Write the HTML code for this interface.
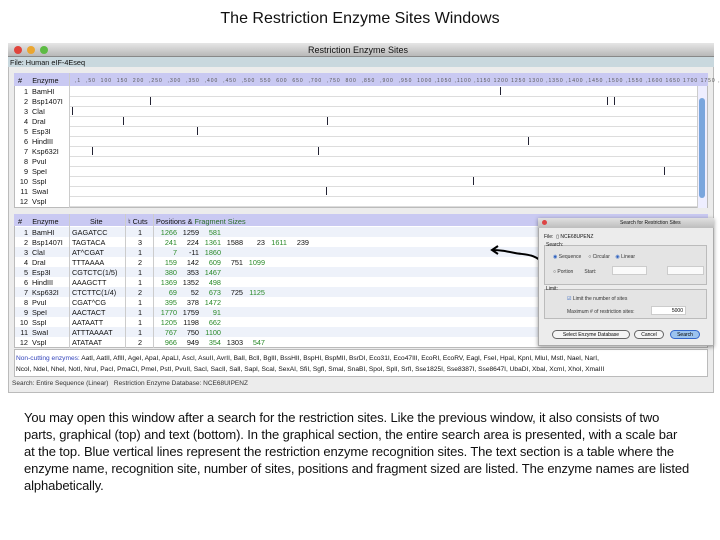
<!DOCTYPE html>
<html><head><style>
*{margin:0;padding:0;box-sizing:border-box}
body{width:720px;height:540px;background:#fff;position:relative;overflow:hidden;font-family:"Liberation Sans",sans-serif}
.a{position:absolute}
.t{font-size:7.3px;color:#111;white-space:nowrap}
.g{color:#2a8a2a}
p{position:absolute;left:24px;top:409px;font-size:13px;line-height:17px;color:#111;letter-spacing:-0.12px;white-space:nowrap}
</style></head><body>
<div class="a" style="left:0;top:10px;width:720px;text-align:center;font-size:16px;color:#111">The Restriction Enzyme Sites Windows</div>

<div class="a" style="left:8px;top:43px;width:706px;height:350px;background:#ececec;border:1px solid #bbb"></div>
<div class="a" style="left:8px;top:43px;width:706px;height:14px;background:linear-gradient(#e6e6e6,#b8b8b8);border-bottom:1px solid #888"></div>
<div class="a" style="left:14px;top:46px;width:8px;height:8px;border-radius:50%;background:#e0443c"></div>
<div class="a" style="left:27px;top:46px;width:8px;height:8px;border-radius:50%;background:#eaa631"></div>
<div class="a" style="left:40px;top:46px;width:8px;height:8px;border-radius:50%;background:#5dbb44"></div>
<div class="a t" style="left:308px;top:45px;font-size:9px">Restriction Enzyme Sites</div>
<div class="a" style="left:8px;top:57px;width:706px;height:10px;background:#c9d8de"></div>
<div class="a t" style="left:10px;top:58px">File: Human eIF-4Eseq</div>

<div class="a" style="left:14px;top:73px;width:694px;height:135px;background:#fff;border:1px solid #bbb"></div>
<div class="a" style="left:14px;top:73px;width:694px;height:13px;background:#c9c9f2"></div>
<div class="a t" style="left:18px;top:76px">#&nbsp;&nbsp;&nbsp;&nbsp;&nbsp;Enzyme</div>
<div class="a t" style="left:75px;top:78px;font-size:5px;color:#555;letter-spacing:1px">,1 &nbsp;,50 &nbsp;100 &nbsp;150 &nbsp;200 &nbsp;,250 &nbsp;,300 &nbsp;,350 &nbsp;,400 &nbsp;,450 &nbsp;,500 &nbsp;550 &nbsp;600 &nbsp;650 &nbsp;,700 &nbsp;,750 &nbsp;800 &nbsp;,850 &nbsp;,900 &nbsp;,950 &nbsp;1000 ,1050 ,1100 ,1150 1200 1250 1300 ,1350 ,1400 ,1450 ,1500 ,1550 ,1600 1650 1700 1750 ,1800</div>
<div class="a" style="left:69px;top:73px;width:1px;height:135px;background:#ccc"></div>
<div class="a" style="left:697px;top:86px;width:10px;height:122px;background:#eef;border-left:1px solid #ccc"></div>
<div class="a" style="left:699px;top:98px;width:6px;height:100px;border-radius:3px;background:#7aa6dd"></div>
<div id="gr"></div>

<div class="a" style="left:14px;top:214px;width:694px;height:134px;background:#fff;border:1px solid #bbb"></div>
<div class="a" style="left:14px;top:214px;width:694px;height:12px;background:#c9c9f2"></div>
<div class="a t" style="left:18px;top:217px">#&nbsp;&nbsp;&nbsp;&nbsp;&nbsp;Enzyme</div>
<div class="a t" style="left:90px;top:217px">Site</div>
<div class="a t" style="left:128px;top:217px">♮ Cuts</div>
<div class="a t" style="left:156px;top:217px">Positions &amp; <span style="color:#2a6a2a">Fragment Sizes</span></div>
<div id="tb"></div>

<div class="a" style="left:14px;top:349px;width:694px;height:28px;background:#fff;border:1px solid #bbb"></div>
<div class="a t" style="left:16px;top:355px;font-size:6.6px"><span style="color:#3344bb">Non-cutting enzymes:</span> AatI, AatII, AflII, AgeI, ApaI, ApaLI, AscI, AsuII, AvrII, BalI, BclI, BglII, BssHII, BspHI, BspMII, BsrDI, Eco31I, Eco47III, EcoRI, EcoRV, EagI, FseI, HpaI, KpnI, MluI, MstI, NaeI, NarI,</div>
<div class="a t" style="left:16px;top:366px;font-size:6.6px">NcoI, NdeI, NheI, NotI, NruI, PacI, PmaCI, PmeI, PstI, PvuII, SacI, SacII, SalI, SapI, ScaI, SexAI, SfiI, SgfI, SmaI, SnaBI, SpoI, SplI, SrfI, Sse1825I, Sse8387I, Sse8647I, UbaDI, XbaI, XcmI, XhoI, XmaIII</div>
<div class="a t" style="left:12px;top:380px;font-size:6.5px;color:#333">Search: Entire Sequence (Linear) &nbsp;&nbsp;Restriction Enzyme Database: NCE68UIPENZ</div>

<svg class="a" style="left:490px;top:245px" width="60" height="25"><path d="M55 20 C45 8 35 10 25 8 C15 6 10 5 2 5" stroke="#000" stroke-width="2" fill="none"/><path d="M8 1 L2 5 L8 9" stroke="#000" stroke-width="2" fill="none"/></svg>

<div class="a" style="left:538px;top:218px;width:176px;height:128px;background:#ececec;border:1px solid #aaa;box-shadow:0 1px 4px rgba(0,0,0,.4)"></div>
<div class="a" style="left:538px;top:218px;width:176px;height:10px;background:linear-gradient(#e0e0e0,#bdbdbd)"></div>
<div class="a" style="left:542px;top:220px;width:5px;height:5px;border-radius:50%;background:#d44"></div>
<div class="a t" style="left:620px;top:220px;font-size:5px">Search for Restriction Sites</div>
<div class="a t" style="left:544px;top:234px;font-size:5px">File: &nbsp;▯ NCE68UPENZ</div>
<div class="a" style="left:544px;top:245px;width:163px;height:40px;border:1px solid #bbb;background:#e4e4e4"></div>
<div class="a t" style="left:546px;top:242px;font-size:5px">Search:</div>
<div class="a t" style="left:553px;top:254px;font-size:5px;color:#333"><span style="color:#2a5fbf">◉</span> Sequence &nbsp;&nbsp;&nbsp;&nbsp;○ Circular &nbsp;&nbsp;&nbsp;<span style="color:#2a5fbf">◉</span> Linear</div>
<div class="a t" style="left:553px;top:269px;font-size:5px;color:#333">○ Portion &nbsp;&nbsp;&nbsp;&nbsp;&nbsp;&nbsp;&nbsp;Start:</div>
<div class="a" style="left:612px;top:266px;width:35px;height:9px;background:#fafafa;border:1px solid #ccc"></div>
<div class="a" style="left:667px;top:266px;width:37px;height:9px;background:#fafafa;border:1px solid #ccc"></div>
<div class="a" style="left:544px;top:289px;width:163px;height:30px;border:1px solid #bbb;background:#e4e4e4"></div>
<div class="a t" style="left:546px;top:286px;font-size:5px">Limit:</div>
<div class="a t" style="left:567px;top:296px;font-size:5px;color:#333"><span style="color:#2a5fbf">☑</span> Limit the number of sites</div>
<div class="a t" style="left:567px;top:309px;font-size:5px;color:#333">Maximum # of restriction sites:</div>
<div class="a" style="left:651px;top:306px;width:35px;height:9px;background:#fff;border:1px solid #ccc;font-size:5px;text-align:right;padding-right:2px;line-height:8px">5000</div>
<div class="a" style="left:552px;top:330px;width:78px;height:9px;border:1px solid #666;border-radius:5px;background:#f5f5f5;font-size:5px;text-align:center;line-height:8px">Select Enzyme Database</div>
<div class="a" style="left:634px;top:330px;width:30px;height:9px;border:1px solid #666;border-radius:5px;background:#f5f5f5;font-size:5px;text-align:center;line-height:8px">Cancel</div>
<div class="a" style="left:670px;top:330px;width:30px;height:9px;border:1px solid #36c;border-radius:5px;background:#9cc3ef;font-size:5px;text-align:center;line-height:8px">Search</div>

<p>You may open this window after a search for the restriction sites. Like the previous window, it also consists of two<br>parts, graphical (top) and text (bottom). In the graphical section, the entire search area is presented, with a scale bar<br>at the top. Blue vertical lines represent the restriction enzyme recognition sites. The text section is a table where the<br>enzyme name, recognition site, number of sites, positions and fragment sized are listed. The enzyme names are listed<br>alphabetically.</p>

<script>
var en=["BamHI","Bsp1407I","ClaI","DraI","Esp3I","HindIII","Ksp632I","PvuI","SpeI","SspI","SwaI","VspI"];
var site=["GAGATCC","TAGTACA","AT^CGAT","TTTAAAA","CGTCTC(1/5)","AAAGCTT","CTCTTC(1/4)","CGAT^CG","AACTACT","AATAATT","ATTTAAAAT","ATATAAT"];
var cuts=[1,3,1,2,1,1,2,1,1,1,1,2];
var pos=[[1266,1259,581],[241,224,1361,1588,23,1611,239],[7,-11,1860],[159,142,609,751,1099],[380,353,1467],[1369,1352,498],[69,52,673,725,1125],[395,378,1472],[1770,1759,91],[1205,1198,662],[767,750,1100],[966,949,354,1303,547]];
var lines=[[500],[150,607,614],[72],[123,327],[197],[528],[92,318],[],[664],[473],[326],[]];
var h="";
for(var i=0;i<12;i++){var y=86+i*10;
h+='<div class="a t" style="left:16px;top:'+(y+1)+'px;width:12px;text-align:right">'+(i+1)+'</div><div class="a t" style="left:32px;top:'+(y+1)+'px">'+en[i]+'</div>';
h+='<div class="a" style="left:70px;top:'+(y+10)+'px;width:627px;height:1px;background:#ddd"></div>';
lines[i].forEach(function(x){h+='<div class="a" style="left:'+x+'px;top:'+(y+1)+'px;width:1px;height:8px;background:#223"></div>'});}
document.getElementById("gr").innerHTML=h;
h="";
for(var i=0;i<12;i++){var y=227+i*10;
if(i%2==0)h+='<div class="a" style="left:15px;top:'+y+'px;width:692px;height:10px;background:#eef2fa"></div>';
h+='<div class="a t" style="left:16px;top:'+(y+1)+'px;width:12px;text-align:right">'+(i+1)+'</div><div class="a t" style="left:32px;top:'+(y+1)+'px">'+en[i]+'</div>';
h+='<div class="a t" style="left:72px;top:'+(y+1)+'px">'+site[i]+'</div><div class="a t" style="left:138px;top:'+(y+1)+'px">'+cuts[i]+'</div>';
pos[i].forEach(function(v,k){var x=156+k*22;
h+='<div class="a t'+((k==0||k==2||k==5||k==4&&pos[i].length==5)?' g':'')+'" style="left:'+x+'px;top:'+(y+1)+'px;width:21px;text-align:right">'+v+'</div>';});}
h+='<div class="a" style="left:69px;top:214px;width:1px;height:134px;background:#ccc"></div><div class="a" style="left:125px;top:214px;width:1px;height:134px;background:#ccc"></div><div class="a" style="left:153px;top:214px;width:1px;height:134px;background:#ccc"></div>';
document.getElementById("tb").innerHTML=h;
</script>
</body></html>
